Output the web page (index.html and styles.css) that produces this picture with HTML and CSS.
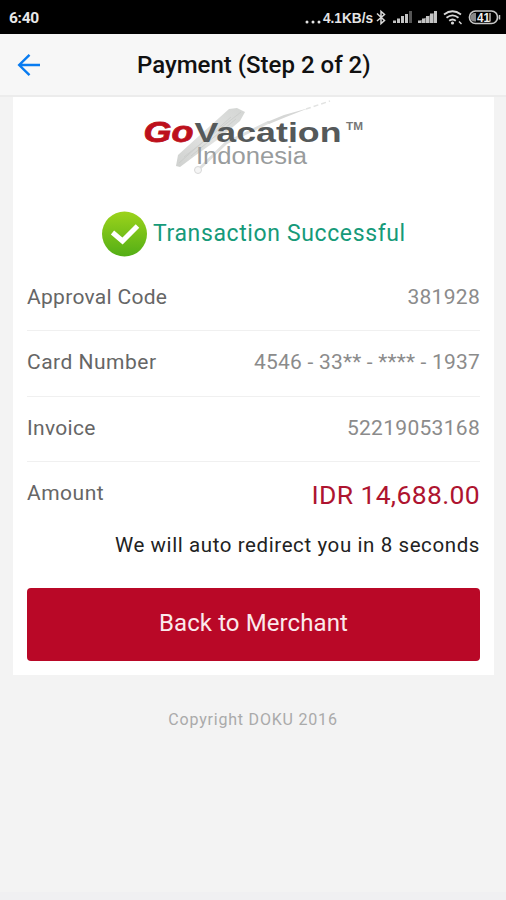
FILE: index.html
```
<!DOCTYPE html>
<html lang="en">
<head>
<meta charset="utf-8">
<title>Payment (Step 2 of 2)</title>
<link rel="stylesheet" href="styles.css">
</head>
<body>
<div class="status">
  <span class="clock">6:40</span>
  <svg class="indicators" width="202" height="34" viewBox="0 0 202 34">
    <g fill="#e4e4e4">
      <circle cx="3" cy="22" r="1.5"/><circle cx="9" cy="22" r="1.5"/><circle cx="15" cy="22" r="1.5"/>
      <text class="speed" x="19" y="23" textLength="50" lengthAdjust="spacingAndGlyphs">4.1KB/s</text>
    </g>
    <path d="M73 13.500 80.500 20.500 77 23.500V11.500L80.500 14.500 73 21" fill="none" stroke="#d8d8d8" stroke-width="1.500"/>
    <g fill="#c4c4c4">
      <path d="M89 20.500h3V23h-3zM93 18.500h3V23h-3zM97 16h3v7h-3zM101 14h3v9h-3z"/>
      <path d="M105 11h3v12h-3z" fill="#555"/>
      <path d="M114 20.500h3V23h-3zM118 18.500h3V23h-3zM122 16h3v7h-3zM126 13.500h3V23h-3zM130 11h3v12h-3z"/>
      <path d="M114 22 132 12v11h-18z" opacity=".6"/>
    </g>
    <g fill="none" stroke="#d8d8d8" stroke-width="1.800">
      <path d="M140 14.500q8.500-6.500 17 0M142.500 17.800q6-4.800 12 0M145.200 20.800q3.300-2.600 6.600 0"/>
      <path d="m155 21.500 2.500 2.500" stroke-width="1.400"/>
    </g>
    <circle cx="148.500" cy="23" r="1.600" fill="#d8d8d8"/>
    <rect x="165.500" y="11" width="28" height="12.500" rx="6" fill="none" stroke="#c8c8c8" stroke-width="1.700"/>
    <path d="M172 13h-1.500a4.200 4.200 0 0 0 0 8.500h1.500zM185 13h2v8.500h-2z" fill="#888"/>
    <path d="M195.500 15v4.500" stroke="#c8c8c8" stroke-width="1.500"/>
    <text class="battery" x="173" y="21.500" textLength="13" lengthAdjust="spacingAndGlyphs" fill="#eee">41</text>
  </svg>
</div>
<header class="bar">
  <svg class="back" width="24" height="24" viewBox="0 0 24 24" fill="none" stroke="#087bf0" stroke-width="2.400"><path d="M23 12H2M12.500 1.800 2.200 12l10.300 10.200"/></svg>
  <h1 class="title">Payment (Step 2 of 2)</h1>
</header>
<main class="card">
  <svg class="logo" width="250" height="80" viewBox="0 0 250 80">
    <defs><linearGradient id="brush" x1="0" y1="1" x2="1" y2="0"><stop offset="0" stop-color="#cfd1cf"/><stop offset=".5" stop-color="#e2e3e2"/><stop offset="1" stop-color="#d3d5d3"/></linearGradient></defs>
    <path d="M45 69 47 58 69 38 98 12l8-1 8 4-5 9-20 17-24 17-16 12z" fill="url(#brush)"/>
    <path d="M48 66 100 20M53 60 110 15M60 59 105 22" stroke="#c6c8c6" stroke-width="1" opacity=".6"/>
    <path d="M66 74 95 46 138 25" stroke="#dfe0df" stroke-width="3" fill="none"/>
    <path d="M136 25 153 18 178 11 155 20 138 27z" fill="#d6d7d6"/>
    <path d="m175 12 24-8" stroke="#e2e3e2" stroke-width="1.500" stroke-dasharray="5 3"/>
    <circle cx="67" cy="73" r="3.500" fill="#f5f5f5" stroke="#d8d8d8"/>
    <text class="go" x="12.500" y="45" textLength="50" lengthAdjust="spacingAndGlyphs">Go</text>
    <text class="vacation" x="63.500" y="45" textLength="147" lengthAdjust="spacingAndGlyphs">Vacation</text>
    <text class="tm" x="215" y="33" textLength="17" lengthAdjust="spacingAndGlyphs">TM</text>
    <text class="country" x="65" y="67" textLength="111" lengthAdjust="spacingAndGlyphs">Indonesia</text>
  </svg>
  <div class="result">
    <svg width="46" height="46" viewBox="0 0 46 46">
      <defs><linearGradient id="ok" x1="0" y1="0" x2="0" y2="1"><stop offset="0" stop-color="#9cd31b"/><stop offset="1" stop-color="#53ae16"/></linearGradient></defs>
      <circle cx="23.500" cy="23" r="22.500" fill="url(#ok)"/>
      <path d="m11.500 21.500 10 8.500 15-15" fill="none" stroke="#fff" stroke-width="5"/>
    </svg>
    <span class="message">Transaction Successful</span>
  </div>
  <div class="row"><span class="label">Approval Code</span><span class="value">381928</span></div>
  <div class="row"><span class="label wide">Card Number</span><span class="value masked">4546 - 33** - **** - 1937</span></div>
  <div class="row"><span class="label">Invoice</span><span class="value">52219053168</span></div>
  <div class="row total"><span class="label wide">Amount</span><span class="amount">IDR 14,688.00</span></div>
  <p class="redirect">We will auto redirect you in 8 seconds</p>
  <button class="merchant">Back to Merchant</button>
</main>
<footer class="copyright">Copyright DOKU 2016</footer>
</body>
</html>
```
FILE: styles.css
```
* { box-sizing: border-box; }
body {
  margin: 0;
  height: 900px;
  display: flex;
  flex-direction: column;
  overflow: hidden;
  background: #f3f3f3;
  font-family: Roboto, "Liberation Sans", sans-serif;
}
.status {
  height: 34px;
  flex: none;
  display: flex;
  justify-content: space-between;
  align-items: center;
  padding: 0 0 0 9px;
  background: #000;
  color: #e8e8e8;
}
.clock { font-size: 15.5px; font-weight: 700; letter-spacing: -.3px; padding-top: 2px; }
.speed { font: 700 14px "Liberation Sans", sans-serif; }
.battery { font: 700 12px "Liberation Sans", sans-serif; }
.bar {
  height: 63px;
  flex: none;
  display: flex;
  align-items: center;
  padding-left: 17px;
  background: #f7f7f7;
  border-bottom: 2px solid #ececec;
}
.title {
  margin: 0 0 0 96px;
  font-size: 24px;
  line-height: 28px;
  font-weight: 500;
  color: #111;
  white-space: nowrap;
}
.card {
  width: 481px;
  height: 578px;
  flex: none;
  margin-left: 13px;
  padding: 0 14px;
  background: #fff;
}
.logo { display: block; margin-left: 104px; }
.go { font: italic 700 29px "Liberation Sans", sans-serif; fill: #bd101c; stroke: #bd101c; stroke-width: .8px; }
.vacation { font: 700 28px "Liberation Sans", sans-serif; fill: #55595a; }
.tm { font: 700 10px "Liberation Sans", sans-serif; fill: #777; }
.country { font: 400 23px "Liberation Sans", sans-serif; fill: #999c9d; }
.result {
  display: flex;
  align-items: center;
  gap: 6px;
  height: 46px;
  margin: 34px 0 0 74px;
}
.message { font-size: 23px; letter-spacing: .62px; color: #169a79; white-space: nowrap; padding-bottom: 2px; }
.row {
  display: flex;
  justify-content: space-between;
  align-items: center;
  height: 65.5px;
  padding-bottom: 2px;
  border-bottom: 1px solid #f0f0f0;
}
.result + .row { height: 74px; padding-top: 8px; }
.label { font-size: 21px; letter-spacing: .3px; color: #666; }
.label.wide { letter-spacing: .5px; }
.value { font-size: 21px; letter-spacing: .3px; color: #8b8b8b; }
.masked { letter-spacing: .2px; }
.total { border: 0; height: 62px; padding: 0; }
.amount { font-size: 26.5px; letter-spacing: .35px; color: #ae1430; padding-top: 3px; }
.redirect {
  margin: 7px 0 0;
  font-size: 20.5px;
  line-height: 28px;
  letter-spacing: .6px;
  color: #222;
  text-align: right;
  white-space: nowrap;
}
.merchant {
  display: block;
  width: 453px;
  height: 73px;
  margin-top: 29px;
  padding: 0 0 4px;
  border: 0;
  border-radius: 4px;
  background: #b90827;
  color: #fbe9ec;
  font: 400 24px Roboto, sans-serif;
  letter-spacing: .1px;
}
.copyright {
  flex: 1;
  padding-top: 35px;
  font-size: 16px;
  line-height: 20px;
  letter-spacing: .8px;
  color: #aaa;
  text-align: center;
  border-bottom: 8px solid #f0f0f2;
}
```
